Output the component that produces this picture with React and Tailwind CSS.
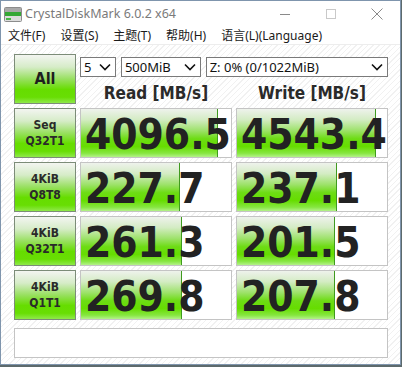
import React from "react";

const rows = [
  { l1: "Seq", l2: "Q32T1", r: "4096.5", rw: 137, w: "4543.4", ww: 139 },
  { l1: "4KiB", l2: "Q8T8", r: "227.7", rw: 99, w: "237.1", ww: 100 },
  { l1: "4KiB", l2: "Q32T1", r: "261.3", rw: 101, w: "201.5", ww: 98 },
  { l1: "4KiB", l2: "Q1T1", r: "269.8", rw: 101, w: "207.8", ww: 98 },
];

const btnGrad =
  "bg-[linear-gradient(to_bottom,#f3f5f1_0%,#d6ecc8_25%,#98e060_50%,#66dd00_72%,#68de04_88%,#8fe94a_100%)]";
const fillGrad =
  "bg-[linear-gradient(to_bottom,#eef2ec_0%,#d4ecc4_22%,#9de26a_45%,#6ddc14_62%,#66dd00_78%,#86e640_92%,#b4f28a_100%)]";
const boldFont = "font-['DejaVu_Sans_Condensed','DejaVu_Sans',sans-serif] font-bold";

function Chevron() {
  return (
    <svg width="12" height="8" viewBox="0 0 12 8" className="shrink-0">
      <path d="M1 1.5 L6 6.5 L11 1.5" fill="none" stroke="#111" strokeWidth="1.6" />
    </svg>
  );
}

function Select({ w, text }) {
  return (
    <div
      className={`${w} h-[20px] border border-[#7a7a7a] bg-white flex items-center justify-between pl-[3px] pr-[4px] text-[13px] leading-none text-[#111] font-['Noto_Sans',sans-serif]`}
    >
      <span>{text}</span>
      <Chevron />
    </div>
  );
}

function Cell({ value, fill }) {
  return (
    <div className="relative h-[50px] border border-[#c4c4c4] bg-white overflow-hidden">
      <div
        className={`absolute left-0 top-0 bottom-0 ${fillGrad} border-r border-[#3f9a1e]`}
        style={{ width: fill }}
      />
      <div
        className={`relative pl-[4px] pt-[5px] text-[42px] leading-[42px] text-[#222] whitespace-nowrap ${boldFont}`}
      >
        {value}
      </div>
    </div>
  );
}

function LabelBtn({ children }) {
  return (
    <div
      className={`h-[50px] border border-[#7c8c78] ${btnGrad} flex flex-col items-center justify-center text-[#2a2a2a] ${boldFont}`}
    >
      {children}
    </div>
  );
}

export default function App() {
  return (
    <div className="w-[402px] h-[367px] bg-[#5d6a6c] overflow-hidden">
      <div className="w-[401px] h-[365px] border border-[#7f95ad] bg-white flex flex-col">
        {/* Title bar */}
        <div className="h-[26px] flex items-center font-['Noto_Sans',sans-serif]">
          <div className="ml-[3px] w-[18px] h-[15px]">
            <svg width="18" height="15" viewBox="0 0 18 15">
              <rect x="0.5" y="0.5" width="17" height="14" rx="1" fill="#dcdcdc" stroke="#8c8c8c" />
              <rect x="1" y="1" width="16" height="4" fill="#a9a9a9" />
              <rect x="1" y="5" width="16" height="4" fill="#35a835" />
              <rect x="2" y="11" width="5" height="2" fill="#48b848" />
            </svg>
          </div>
          <span className="ml-[3px] text-[12.5px] text-[#7a7a7a] leading-none">
            CrystalDiskMark 6.0.2 x64
          </span>
          <div className="ml-auto flex items-center h-full">
            <div className="w-[46px] h-full flex items-center justify-center">
              <div className="w-[10px] h-px bg-[#8a8a8a]" />
            </div>
            <div className="w-[46px] h-full flex items-center justify-center">
              <div className="w-[10px] h-[10px] border border-[#c9c9c9]" />
            </div>
            <div className="w-[46px] h-full flex items-center justify-center">
              <svg width="12" height="12" viewBox="0 0 12 12">
                <path d="M0.5 0.5 L11.5 11.5 M11.5 0.5 L0.5 11.5" stroke="#8a8a8a" strokeWidth="1" />
              </svg>
            </div>
          </div>
        </div>
        {/* Menu bar */}
        <div className="h-[17px] flex items-center pl-[7px] gap-[15px] text-[12px] leading-none text-[#1a1a1a] font-['Noto_Sans','Noto_Sans_CJK_SC',sans-serif]">
          <span>文件(F)</span>
          <span>设置(S)</span>
          <span>主题(T)</span>
          <span>帮助(H)</span>
          <span>语言(L)(Language)</span>
        </div>
        <div className="h-px bg-[#ededed]" />
        {/* Content */}
        <div className="flex-1 pl-[13px] pr-[12px] pt-[9px] bg-[repeating-linear-gradient(135deg,#ffffff_0px,#ffffff_3px,#f1f1f1_3px,#f1f1f1_4px)]">
          <div className="grid grid-cols-[62px_152px_152px] gap-x-[4px] gap-y-[4px]">
            <div
              className={`h-[50px] border border-[#7c8c78] ${btnGrad} flex items-center justify-center text-[16px] text-[#1e1e1e] ${boldFont}`}
            >
              All
            </div>
            <div className="col-span-2 flex flex-col">
              <div className="mt-[3px] flex gap-[5px]">
                <Select w="w-[36px]" text="5" />
                <Select w="w-[80px]" text="500MiB" />
                <Select w="w-[183px]" text="Z: 0% (0/1022MiB)" />
              </div>
              <div className={`flex mt-[5px] text-[17px] leading-[22px] text-[#2a2a2a] ${boldFont}`}>
                <div className="w-[152px] text-center">Read [MB/s]</div>
                <div className="w-[4px]" />
                <div className="w-[152px] text-center">Write [MB/s]</div>
              </div>
            </div>
            {rows.map((r, i) => (
              <React.Fragment key={i}>
                <LabelBtn>
                  <span className="text-[12px] leading-[16px]">{r.l1}</span>
                  <span className="text-[12px] leading-[16px]">{r.l2}</span>
                </LabelBtn>
                <Cell value={r.r} fill={r.rw} />
                <Cell value={r.w} fill={r.ww} />
              </React.Fragment>
            ))}
          </div>
          <div className="mt-[8px] h-[30px] border border-[#c4c4c4] bg-white" />
        </div>
      </div>
    </div>
  );
}
